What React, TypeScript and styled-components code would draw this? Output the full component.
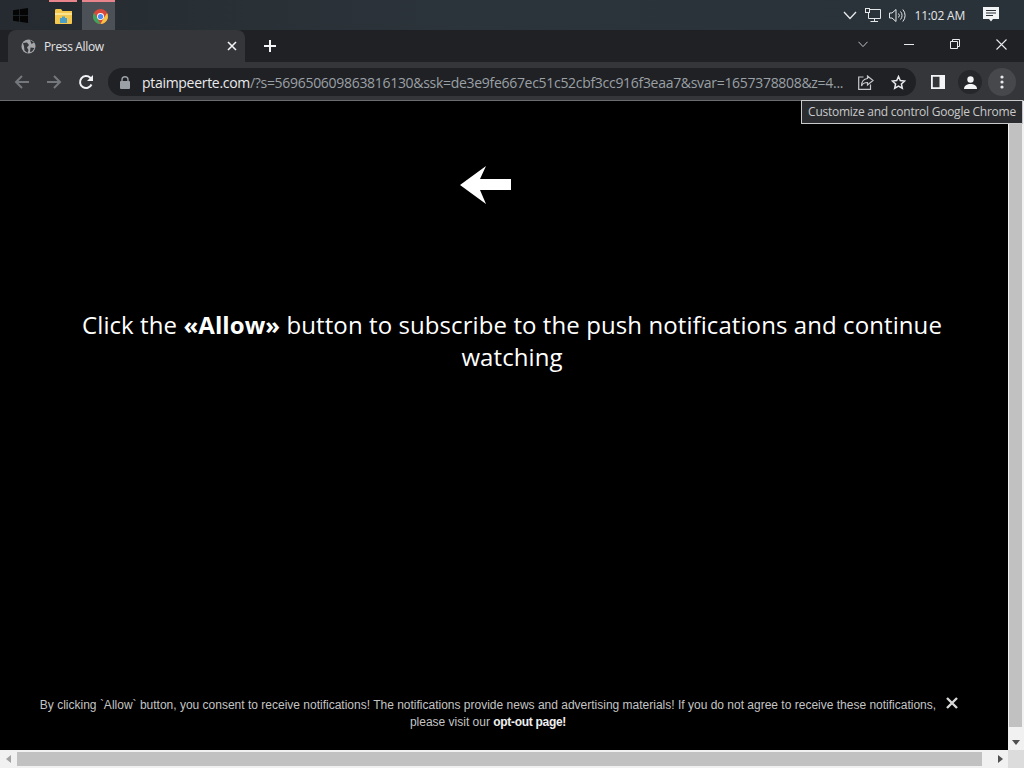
import React from "react";
import styled, { createGlobalStyle } from "styled-components";

const GlobalStyle = createGlobalStyle`
  html, body {
    margin: 0;
    padding: 0;
    height: 100%;
    overflow: hidden;
    background: #000;
    font-family: "Open Sans", "Liberation Sans", sans-serif;
  }
  #root { height: 100%; }
  * { box-sizing: border-box; }
`;

const URL_QUERY =
  "/?s=569650609863816130&ssk=de3e9fe667ec51c52cbf3cc916f3eaa7&svar=1657378808&z=4...";

const App = () => {
  return (
    <Page>
      <GlobalStyle />
      <Taskbar>
        <StartSlot>
          <svg width="15" height="15" viewBox="0 0 16 16">
            <path d="M0 2.3 6.6 1.4V7.6H0ZM7.4 1.3 16 0V7.6H7.4ZM0 8.4H6.6V14.6L0 13.7ZM7.4 8.4H16V16L7.4 14.7Z" fill="#050505" />
          </svg>
        </StartSlot>
        <TaskApp width={28} gap={9}>
          <svg width="17" height="15" viewBox="0 0 17 15">
            <path d="M0 1.5C0 .7.5 0 1.2 0H6L7.5 2H17V14C17 14.6 16.5 15 16 15H1C.4 15 0 14.6 0 14Z" fill="#f4c84f" />
            <rect x="0" y="4" width="17" height="2" fill="#fbe28f" />
            <rect x="5" y="9" width="7" height="5" fill="#4a9fc9" />
            <rect x="7" y="7.5" width="3" height="2" fill="#4a9fc9" />
          </svg>
        </TaskApp>
        <TaskApp width={33} gap={5} active>
          <svg width="15" height="15" viewBox="0 0 16 16">
            <circle cx="8" cy="8" r="8" fill="#d9483b" />
            <path d="M8 16A8 8 0 0 1 1.1 4L4.8 10.2 8 16Z" fill="#3ba55d" />
            <path d="M8 16 11.5 9.5 15 4.2A8 8 0 0 1 8 16Z" fill="#f6c544" />
            <circle cx="8" cy="8" r="3.7" fill="#fff" />
            <circle cx="8" cy="8" r="2.8" fill="#4d8df0" />
          </svg>
        </TaskApp>
        <Tray>
          <TrayChevron width="14" height="9" viewBox="0 0 14 9">
            <path d="M1 1l6 6.5L13 1" fill="none" stroke="#e8eaec" strokeWidth="1.3" />
          </TrayChevron>
          <svg width="16" height="15" viewBox="0 0 16 15" fill="none" stroke="#e4e6e8" strokeWidth="1">
            <path d="M3.5 1.5H15.5V10.5H3.5ZM9.5 10.5V13M5.5 13.5H13" />
            <rect x=".5" y=".5" width="4" height="4" fill="#2a3138" />
          </svg>
          <SpeakerIcon width="17" height="15" viewBox="0 0 17 15" fill="none" stroke="#e4e6e8" strokeWidth="1">
            <path d="M.5 5H3L7 1.5V13.5L3 10H.5Z" />
            <path d="M9.5 5.5A3 3 0 0 1 9.5 9.5M11.5 3.5A6 6 0 0 1 11.5 11.5M13.8 1.5A9 9 0 0 1 13.8 13.5" />
          </SpeakerIcon>
          <Clock>11:02 AM</Clock>
          <NoticeIcon width="16" height="16" viewBox="0 0 16 16">
            <path d="M0 0H16V12H10L8 14.5 6 12H0Z" fill="#f2f3f4" />
            <path d="M3 3.5H13M3 6H13M3 8.5H10" stroke="#2a3138" strokeWidth="1" />
          </NoticeIcon>
        </Tray>
      </Taskbar>

      <TabStrip>
        <Tab>
          <svg width="15" height="15" viewBox="0 0 15 15">
            <circle cx="7.5" cy="7.5" r="7" fill="#a5a7aa" />
            <path d="M2 4 6 3.5 8 6 6 8.5 7.5 11 6.5 14 3.5 11.5 3 7.5ZM9 1 13 3.5 10.5 5ZM9.5 8.5 13.5 9 11 12.5 9 13Z" fill="#35363a" />
          </svg>
          <TabTitle>Press Allow</TabTitle>
          <svg width="10" height="10" viewBox="0 0 10 10">
            <path d="M1 1l8 8M9 1l-8 8" stroke="#f1f3f4" strokeWidth="1.6" />
          </svg>
        </Tab>
        <NewTab>
          <svg width="12" height="12" viewBox="0 0 12 12">
            <path d="M6 0v12M0 6h12" stroke="#f5f6f7" strokeWidth="2" />
          </svg>
        </NewTab>
        <WindowControls>
          <WindowButton>
            <svg width="10" height="7" viewBox="0 0 10 7">
              <path d="M.5.8 5 5.6 9.5.8" fill="none" stroke="#bdc1c6" strokeWidth="1" />
            </svg>
          </WindowButton>
          <WindowButton>
            <svg width="10" height="10" viewBox="0 0 10 10">
              <path d="M0 5.5h10" stroke="#e8eaed" strokeWidth="1" />
            </svg>
          </WindowButton>
          <WindowButton>
            <svg width="10" height="10" viewBox="0 0 10 10" fill="none" stroke="#e8eaed" strokeWidth="1">
              <path d="M.5 2.5h7v7h-7zM2.5 2.5v-2h7v7h-2" />
            </svg>
          </WindowButton>
          <WindowButton>
            <svg width="11" height="11" viewBox="0 0 11 11">
              <path d="M.5.5l10 10M10.5.5l-10 10" stroke="#e8eaed" strokeWidth="1.1" />
            </svg>
          </WindowButton>
        </WindowControls>
      </TabStrip>

      <Toolbar>
        <NavButton>
          <svg width="16" height="16" viewBox="0 0 16 16" fill="none" stroke="#74777b" strokeWidth="2">
            <path d="M15 8H2M8 2 2 8l6 6" />
          </svg>
        </NavButton>
        <NavButton>
          <svg width="16" height="16" viewBox="0 0 16 16" fill="none" stroke="#74777b" strokeWidth="2">
            <path d="M1 8h13M8 2l6 6-6 6" />
          </svg>
        </NavButton>
        <NavButton>
          <svg width="16" height="16" viewBox="0 0 16 16" fill="none" stroke="#f1f3f4" strokeWidth="2">
            <path d="M13.5 10.5A6 6 0 1 1 12.3 3.8L14 5.5" />
            <path d="M15 1v6H9z" fill="#f1f3f4" stroke="none" />
          </svg>
        </NavButton>
        <Omnibox>
          <svg width="10" height="13" viewBox="0 0 10 13">
            <path d="M2 6V3.8a3 3 0 0 1 6 0V6" fill="none" stroke="#9aa0a6" strokeWidth="1.4" />
            <rect y="5" width="10" height="8" rx="1" fill="#9aa0a6" />
          </svg>
          <UrlText>
            <UrlHost>ptaimpeerte.com</UrlHost>
            {URL_QUERY}
          </UrlText>
          <OmniIcon>
            <svg width="16" height="15" viewBox="0 0 16 15" fill="none" stroke="#c6c9cc" strokeWidth="1.2">
              <path d="M5.5 2H.7V14.3H12.5V9.5" />
              <path d="M9.5 1 15 5.5 9.5 10V7.5C6.5 7.5 4.5 8.5 3.5 11 3.5 7 5.5 4 9.5 3.5Z" />
            </svg>
          </OmniIcon>
          <OmniIcon>
            <svg width="15" height="15" viewBox="0 0 15 15" fill="none" stroke="#e8eaed" strokeWidth="1.5">
              <path d="M7.5 1.5 9.3 5.5 13.6 6 10.4 8.9 11.3 13.2 7.5 11 3.7 13.2 4.6 8.9 1.4 6 5.7 5.5Z" />
            </svg>
          </OmniIcon>
        </Omnibox>
        <ToolActions>
          <ToolButton size={28}>
            <svg width="14" height="14" viewBox="0 0 14 14">
              <path d="M0 0H14V14H0ZM1.8 1.8V12.2H8.5V1.8Z" fill="#f4f5f6" fillRule="evenodd" />
            </svg>
          </ToolButton>
          <ToolButton size={24} tint="#26272a">
            <svg width="13" height="13" viewBox="0 0 13 13" fill="#f4f5f6">
              <circle cx="6.5" cy="3.5" r="3.2" />
              <path d="M0 13c0-3.5 3-5 6.5-5s6.5 1.5 6.5 5z" />
            </svg>
          </ToolButton>
          <ToolButton size={28} tint="#47484c">
            <svg width="4" height="14" viewBox="0 0 4 14" fill="#e8eaed">
              <circle cx="2" cy="2" r="1.6" />
              <circle cx="2" cy="7" r="1.6" />
              <circle cx="2" cy="12" r="1.6" />
            </svg>
          </ToolButton>
        </ToolActions>
        <Tooltip>Customize and control Google Chrome</Tooltip>
      </Toolbar>

      <Viewport>
        <ContentRow>
          <Content>
            <ArrowWrap>
              <svg width="52" height="40" viewBox="0 0 52 40">
                <path d="M0 20 26 1 20 14H51V25H20L26 39Z" fill="#fff" />
              </svg>
            </ArrowWrap>
            <Headline>
              Click the <strong>«Allow»</strong> button to subscribe to the push notifications and continue watching
            </Headline>
            <Spacer />
            <Consent>
              <CloseMark width="12" height="12" viewBox="0 0 12 12">
                <path d="M1 1l10 10M11 1 1 11" stroke="#d8d8d8" strokeWidth="2.4" />
              </CloseMark>
              By clicking `Allow` button, you consent to receive notifications! The notifications provide news and
              advertising materials! If you do not agree to receive these notifications, please visit our{" "}
              <ConsentLink>opt-out page!</ConsentLink>
            </Consent>
          </Content>
          <VScroll>
            <ScrollEnd>
              <Triangle dir="up" />
            </ScrollEnd>
            <VThumb />
            <ScrollEnd>
              <Triangle dir="down" />
            </ScrollEnd>
          </VScroll>
        </ContentRow>
        <HScroll>
          <ScrollEnd>
            <Triangle dir="left" />
          </ScrollEnd>
          <HThumb />
          <ScrollEnd>
            <Triangle dir="right" />
          </ScrollEnd>
          <ScrollCorner />
        </HScroll>
      </Viewport>
    </Page>
  );
};

const Page = styled.div`
  display: flex;
  flex-direction: column;
  width: 1024px;
  height: 768px;
  overflow: hidden;
`;

const Taskbar = styled.div`
  display: flex;
  align-items: center;
  height: 30px;
  flex: none;
  background: linear-gradient(90deg, #252b30 0%, #2c343b 45%, #2a3239 100%);
`;

const StartSlot = styled.div`
  display: flex;
  align-items: center;
  justify-content: center;
  width: 40px;
  height: 30px;
`;

const TaskApp = styled.div<{ width: number; gap: number; active?: boolean }>`
  display: flex;
  align-items: center;
  justify-content: center;
  width: ${(p) => p.width}px;
  height: 30px;
  margin-left: ${(p) => p.gap}px;
  padding-left: ${(p) => (p.active ? "3px" : "0")};
  border-top: 2px solid #e8848b;
  background: ${(p) => (p.active ? "#4b5157" : "transparent")};
`;

const Tray = styled.div`
  display: flex;
  align-items: center;
  margin-left: auto;
  gap: 7px;
  height: 30px;
  padding-right: 25px;
`;

const TrayChevron = styled.svg`
  margin-right: 1px;
`;

const SpeakerIcon = styled.svg`
  margin-left: 1px;
`;

const Clock = styled.span`
  margin-left: 2px;
  font-size: 12px;
  letter-spacing: -0.2px;
  color: #e4e6e8;
`;

const NoticeIcon = styled.svg`
  margin-left: 11px;
`;

const TabStrip = styled.div`
  display: flex;
  align-items: flex-end;
  height: 32px;
  flex: none;
  padding-left: 8px;
  background: #202124;
`;

const Tab = styled.div`
  display: flex;
  align-items: center;
  width: 237px;
  height: 32px;
  padding: 0 8px 0 13px;
  border-radius: 8px 8px 0 0;
  background: #35363a;
`;

const TabTitle = styled.span`
  flex: 1;
  margin-left: 8px;
  font-size: 12px;
  letter-spacing: -0.35px;
  color: #e3e4e6;
`;

const NewTab = styled.div`
  display: flex;
  align-items: center;
  justify-content: center;
  align-self: center;
  width: 28px;
  height: 28px;
  margin-left: 11px;
`;

const WindowControls = styled.div`
  display: flex;
  align-self: stretch;
  margin-left: auto;
`;

const WindowButton = styled.div`
  display: flex;
  align-items: center;
  justify-content: center;
  width: 46px;
  height: 28px;
`;

const Toolbar = styled.div`
  position: relative;
  display: flex;
  align-items: center;
  height: 39px;
  flex: none;
  padding: 2px 0 0 6px;
  background: #35363a;
  border-bottom: 1px solid #6b6c6f;
`;

const NavButton = styled.div`
  display: flex;
  align-items: center;
  justify-content: center;
  width: 32px;
  height: 32px;
`;

const Omnibox = styled.div`
  display: flex;
  align-items: center;
  width: 808px;
  height: 28px;
  margin-left: 6px;
  padding: 0 2px 0 12px;
  border-radius: 14px;
  background: #202124;
`;

const UrlText = styled.span`
  flex: 1;
  margin-left: 12px;
  min-width: 0;
  white-space: nowrap;
  font-size: 14px;
  letter-spacing: -0.3px;
  color: #9aa0a6;
`;

const UrlHost = styled.span`
  color: #e8eaed;
`;

const OmniIcon = styled.div`
  display: flex;
  align-items: center;
  justify-content: center;
  width: 32px;
  height: 28px;
`;

const ToolActions = styled.div`
  display: flex;
  align-items: center;
  gap: 6px;
  margin-left: 8px;
`;

const ToolButton = styled.div<{ size: number; tint?: string }>`
  display: flex;
  align-items: center;
  justify-content: center;
  width: ${(p) => p.size}px;
  height: ${(p) => p.size}px;
  border-radius: 50%;
  background: ${(p) => p.tint ?? "transparent"};
`;

const Tooltip = styled.div`
  position: absolute;
  top: 38px;
  left: 801px;
  width: 222px;
  height: 24px;
  line-height: 22px;
  text-align: center;
  white-space: nowrap;
  font-size: 12px;
  letter-spacing: -0.25px;
  color: #c8c9ca;
  background: #2b2c2f;
  border: 1px solid #c9cacb;
  z-index: 2;
`;

const Viewport = styled.div`
  flex: 1;
  display: flex;
  flex-direction: column;
  min-height: 0;
`;

const ContentRow = styled.div`
  flex: 1;
  display: flex;
  min-height: 0;
`;

const Content = styled.div`
  flex: 1;
  display: flex;
  flex-direction: column;
  align-items: center;
  background: #000;
  color: #fff;
`;

const ArrowWrap = styled.div`
  display: flex;
  height: 40px;
  margin-top: 64px;
  margin-left: -36px;
`;

const Headline = styled.h1`
  width: 880px;
  margin: 104px 0 0 16px;
  text-align: center;
  font-family: "Open Sans", "DejaVu Sans", sans-serif;
  font-size: 24px;
  line-height: 32px;
  font-weight: 400;
  letter-spacing: 0.085px;
  color: #fff;

  strong {
    font-weight: 700;
  }
`;

const Spacer = styled.div`
  flex: 1;
`;

const Consent = styled.div`
  position: relative;
  align-self: flex-start;
  width: 912px;
  margin: 0 0 19px 32px;
  text-align: center;
  font-family: "Liberation Sans", Arial, sans-serif;
  font-size: 12px;
  line-height: 17px;
  color: #c4c4c4;
`;

const CloseMark = styled.svg`
  position: absolute;
  top: 0;
  right: -14px;
`;

const ConsentLink = styled.span`
  font-weight: 700;
  white-space: nowrap;
  letter-spacing: -0.3px;
  color: #efefef;
`;

const VScroll = styled.div`
  display: flex;
  flex-direction: column;
  width: 16px;
  flex: none;
  background: #f1f1f1;
`;

const VThumb = styled.div`
  flex: 1;
  margin: 0 2px 7px 1px;
  background: #c1c1c1;
`;

const HScroll = styled.div`
  display: flex;
  align-items: center;
  height: 18px;
  flex: none;
  background: #f1f1f1;
`;

const HThumb = styled.div`
  flex: 1;
  height: 14px;
  margin: 0 10px 0 1px;
  background: #c1c1c1;
`;

const ScrollEnd = styled.div`
  display: flex;
  align-items: center;
  justify-content: center;
  width: 16px;
  height: 16px;
  flex: none;
`;

const ScrollCorner = styled.div`
  align-self: stretch;
  width: 16px;
  flex: none;
  background: #dcdcdc;
`;

const triangleBorders: Record<string, string> = {
  up: "border-width: 0 4px 5px 4px; border-color: transparent transparent #505050 transparent;",
  down: "border-width: 5px 4px 0 4px; border-color: #505050 transparent transparent transparent;",
  left: "border-width: 4px 5px 4px 0; border-color: transparent #a3a3a3 transparent transparent;",
  right: "border-width: 4px 0 4px 5px; border-color: transparent transparent transparent #505050;",
};

const Triangle = styled.div<{ dir: string }>`
  width: 0;
  height: 0;
  border-style: solid;
  ${(p) => triangleBorders[p.dir]}
`;

export default App;
